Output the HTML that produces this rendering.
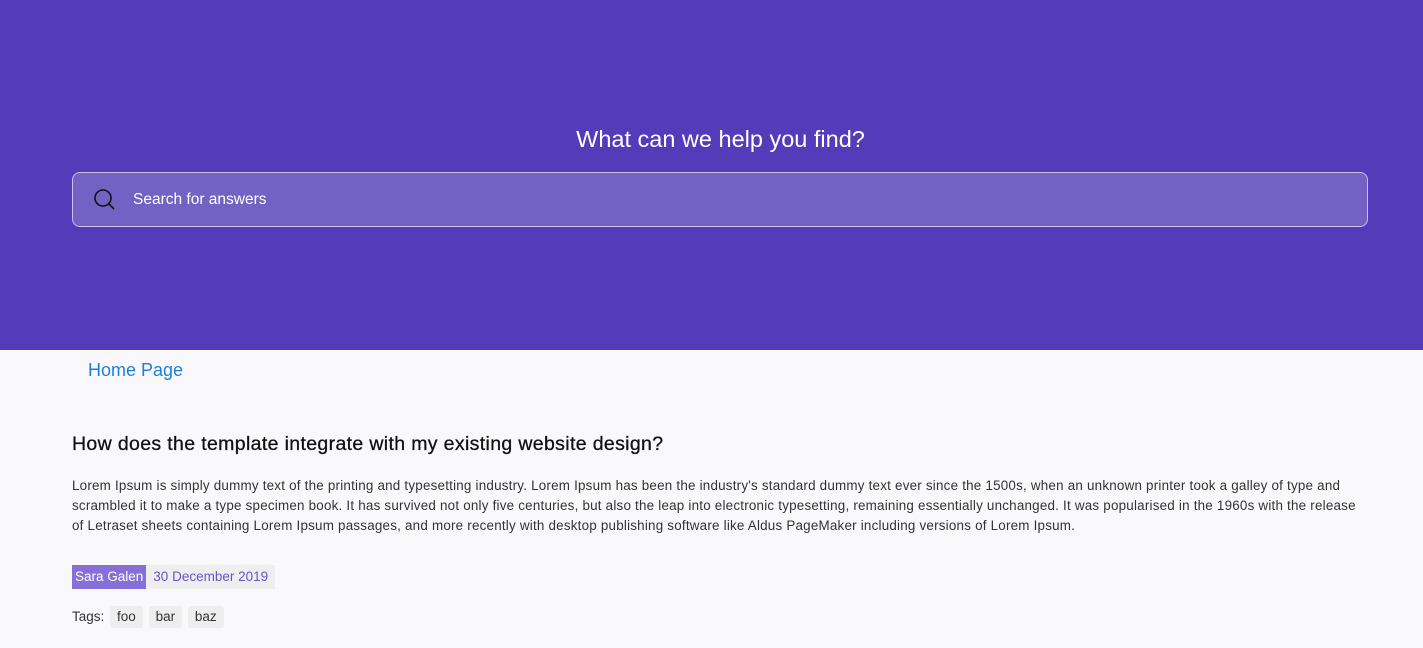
<!DOCTYPE html>
<html><head><style>
body{margin:0;background:#f9f9fb;font-family:"Liberation Sans",Arial,sans-serif;width:1423px;height:648px;overflow:hidden}
.hero{background:#523cba;height:350px;position:relative}
.hero h1{position:absolute;top:126px;left:0;right:0;text-align:center;margin:0;color:#fff;font-weight:normal;font-size:23.5px;padding-left:18px}
.search{position:absolute;left:72px;top:172px;width:1294px;height:53px;border:1px solid #c9c2ea;border-radius:8px;background:#7262c3}
.search svg{position:absolute;left:20px;top:15px}
.search span{position:absolute;left:60px;top:18px;color:#fff;font-size:15.5px}
.bc{position:absolute;left:88px;top:360px;color:#1e7fd6;font-size:18px}
h2{position:absolute;left:72px;top:433px;margin:0;font-size:19.5px;font-weight:normal;color:#111;letter-spacing:0.35px;-webkit-text-stroke:0.3px #111}
p{position:absolute;left:72px;top:476px;width:1296px;margin:0;font-size:13.4px;line-height:20px;color:#333;letter-spacing:0.22px}
.meta{position:absolute;left:72px;top:565px;height:24px;font-size:13.5px;line-height:24px}
.a{background:#866fd9;color:#fff;padding:0 3px;float:left}
.d{background:#eeeeef;color:#6c53c5;padding:0 7px;float:left}
.tags{position:absolute;left:72px;top:606px;font-size:13.5px;color:#333;line-height:22px}
.tags b{font-weight:normal;background:#eeeeef;border-radius:3px;padding:0 7px;margin-left:2px;display:inline-block}
</style></head><body>
<div class="hero"><h1>What can we help you find?</h1>
<div class="search"><svg width="24" height="24" viewBox="0 0 24 24"><circle cx="10" cy="10" r="8" fill="none" stroke="#111" stroke-width="1.6"/><path d="M16 16l5 5" stroke="#111" stroke-width="1.6"/></svg><span>Search for answers</span></div></div>
<div class="bc">Home Page</div>
<h2>How does the template integrate with my existing website design?</h2>
<p>Lorem Ipsum is simply dummy text of the printing and typesetting industry. Lorem Ipsum has been the industry's standard dummy text ever since the 1500s, when an unknown printer took a galley of type and scrambled it to make a type specimen book. It has survived not only five centuries, but also the leap into electronic typesetting, remaining essentially unchanged. It was popularised in the 1960s with the release of Letraset sheets containing Lorem Ipsum passages, and more recently with desktop publishing software like Aldus PageMaker including versions of Lorem Ipsum.</p>
<div class="meta"><span class="a">Sara Galen</span><span class="d">30 December 2019</span></div>
<div class="tags">Tags: <b>foo</b> <b>bar</b> <b>baz</b></div>
</body></html>
